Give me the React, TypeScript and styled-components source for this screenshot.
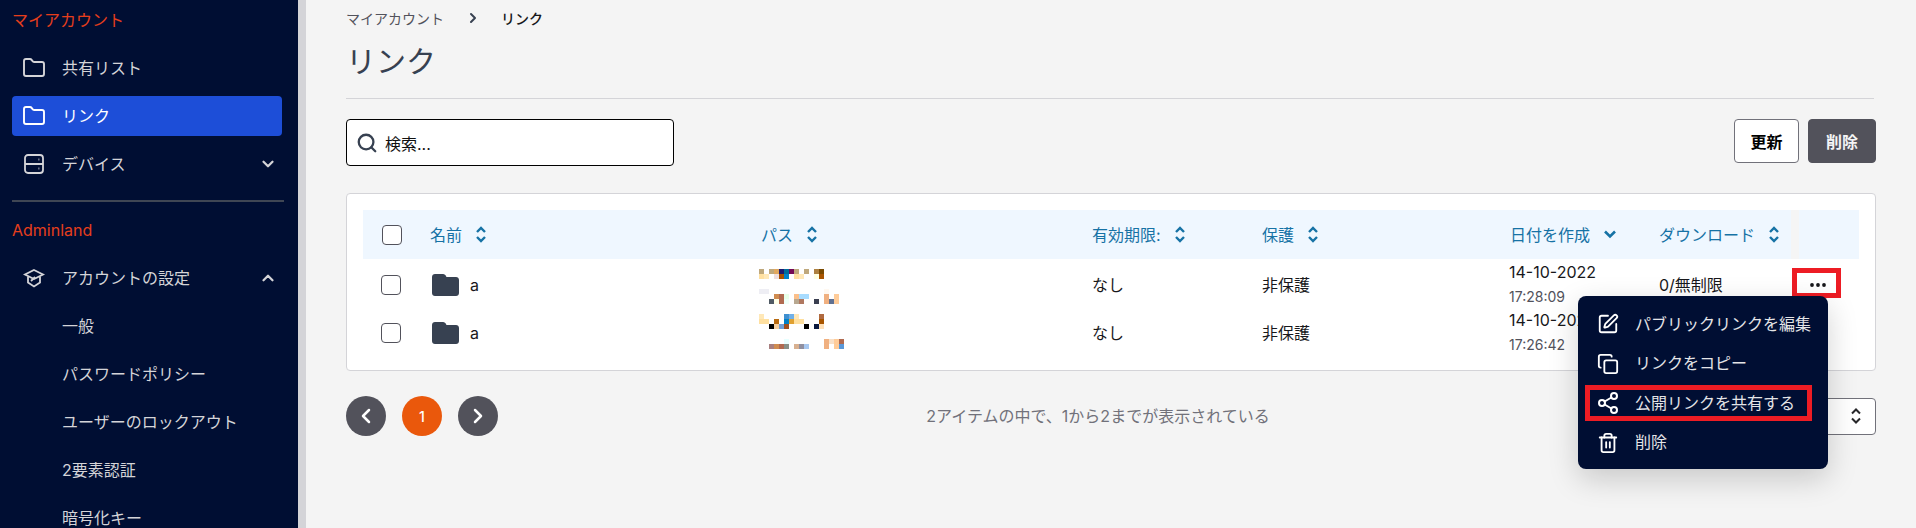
import styled, {createGlobalStyle} from 'styled-components';
import {
    ChevronDown,
    ChevronLeft,
    ChevronRight,
    ChevronUp,
    Copy,
    Folder,
    Search,
    Share2,
    SquarePen,
    Trash2,
} from 'lucide-react';

const GlobalStyle = createGlobalStyle`
    html, body {
        margin: 0;
        height: 528px;
        overflow: hidden;
        background: #f4f4f4;
        font-family: Inter, "Noto Sans CJK JP", sans-serif;
    }
    * {
        box-sizing: border-box;
    }
`;

const Page = styled.div`
    display: flex;
    width: 1916px;
    height: 528px;
    overflow: hidden;
`;

const Sidebar = styled.nav`
    flex: 0 0 306px;
    height: 528px;
    padding: 8px 16px 0 12px;
    background: #000e33;
    border-right: 8px solid #d4d4d8;
    overflow: hidden;
`;

const SectionLabel = styled.div`
    font-size: 16px;
    line-height: 24px;
    color: #e63e1c;
    margin-bottom: 16px;
`;

const NavList = styled.div`
    display: flex;
    flex-direction: column;
    gap: 8px;
`;

const NavItem = styled.div<{$active?: boolean; $sub?: boolean}>`
    display: flex;
    align-items: center;
    gap: 16px;
    flex: 0 0 40px;
    height: 40px;
    padding: 0 5px 0 ${(props) => (props.$sub ? '50px' : '10px')};
    border-radius: 4px;
    font-size: 16px;
    color: ${(props) => (props.$active ? '#ffffff' : '#d4d4d8')};
    background: ${(props) => (props.$active ? '#1d4ed8' : 'transparent')};
`;

const NavText = styled.span`
    padding-bottom: 2px;
`;

const NavArrow = styled.span`
    display: flex;
    margin-left: auto;
`;

const SidebarRule = styled.hr`
    width: 272px;
    height: 2px;
    margin: 16px 0;
    border: 0;
    background: #3f4654;
`;

const Main = styled.main`
    flex: 1;
    min-width: 0;
    padding: 6px 40px 0 40px;
`;

const Breadcrumbs = styled.div`
    display: flex;
    align-items: center;
    height: 24px;
    font-size: 14px;
    color: #52525b;
`;

const CrumbArrow = styled.span`
    display: flex;
    margin: 0 20px 0 21px;
    color: #374151;
`;

const CrumbCurrent = styled.span`
    color: #18181b;
    font-weight: 500;
`;

const Title = styled.h1`
    margin: 10px 2px 0 0;
    padding-top: 1px;
    height: 59px;
    border-bottom: 1px solid #d4d4d8;
    font-size: 30px;
    line-height: 40px;
    font-weight: 400;
    color: #374151;
`;

const Toolbar = styled.div`
    display: flex;
    align-items: flex-start;
    justify-content: space-between;
    margin-top: 20px;
`;

const SearchBox = styled.div`
    display: flex;
    align-items: center;
    gap: 7px;
    width: 328px;
    height: 47px;
    padding-left: 9px;
    background: #ffffff;
    border: 1px solid #000000;
    border-radius: 4px;
    font-size: 16px;
    color: #111111;
`;

const Buttons = styled.div`
    display: flex;
    gap: 9px;
`;

const Button = styled.div<{$primary?: boolean}>`
    display: flex;
    align-items: center;
    justify-content: center;
    width: ${(props) => (props.$primary ? '68px' : '65px')};
    height: 44px;
    border-radius: 4px;
    font-size: 16px;
    font-weight: 700;
    color: ${(props) => (props.$primary ? '#f4f4f5' : '#000000')};
    background: ${(props) => (props.$primary ? '#52525b' : '#ffffff')};
    border: 1px solid ${(props) => (props.$primary ? '#52525b' : '#71717a')};
`;

const Card = styled.section`
    margin-top: 27px;
    padding: 16px 16px 15px;
    background: #ffffff;
    border: 1px solid #d4d4d8;
    border-radius: 4px;
`;

const columns = '67px 331px 331px 170px 248px 149px 132px 68px';

const HeadRow = styled.div`
    display: grid;
    grid-template-columns: ${columns};
    height: 49px;
    background: #eff7ff;
    font-size: 16px;
    color: #1672a5;
`;

const HeadCell = styled.div`
    display: flex;
    align-items: center;
    gap: 14px;
`;

const HeadText = styled.span`
    padding-bottom: 2px;
`;

const HeadCheckCell = styled(HeadCell)`
    padding-left: 19px;
`;

const HeadEndCell = styled.div`
    border-left: 8px solid #f5f5f5;
`;

const Row = styled.div`
    display: grid;
    grid-template-columns: ${columns};
    height: 48px;
    font-size: 16px;
    color: #18181b;
`;

const Cell = styled.div`
    display: flex;
    align-items: center;
`;

const RowCheckCell = styled(Cell)`
    padding: 2px 0 0 18px;
`;

const NameCell = styled(Cell)`
    gap: 11px;
    padding: 2px 0 0 2px;
`;

const PathCell = styled(Cell)`
    margin-left: -2px;
`;

const DateCell = styled.div`
    padding-top: 1px;
    margin-left: -1px;
`;

const DateText = styled.div`
    line-height: 24px;
`;

const TimeText = styled.div`
    margin-top: 1px;
    font-size: 14px;
    line-height: 24px;
    color: #52525b;
`;

const ActionCell = styled(Cell)`
    position: relative;
`;

const Checkbox = styled.span`
    display: block;
    width: 20px;
    height: 20px;
    background: #ffffff;
    border: 1px solid #52525b;
    border-radius: 4px;
`;

const ActionButton = styled.div`
    display: flex;
    align-items: center;
    justify-content: center;
    width: 49px;
    height: 30px;
    margin: -2px 0 0 1px;
    padding: 3px 0 0 3px;
    background: #ffffff;
    border: 5px solid #ed1c24;
`;

const Menu = styled.div`
    position: absolute;
    top: 37px;
    right: 31px;
    z-index: 2;
    display: flex;
    flex-direction: column;
    gap: 3.5px;
    width: 250px;
    height: 173px;
    padding: 10px 16px 0 7px;
    background: #000e33;
    border-radius: 8px;
    box-shadow: 0 10px 30px rgba(0, 0, 0, 0.18);
`;

const MenuItem = styled.div<{$marked?: boolean}>`
    display: flex;
    align-items: center;
    gap: 15px;
    height: 36px;
    padding-left: 11px;
    font-size: 16px;
    white-space: nowrap;
    color: #e4e4e7;
    box-shadow: ${(props) => (props.$marked ? 'inset 0 0 0 5px #ed1c24' : 'none')};
`;

const MenuIcon = styled.span`
    display: flex;
    justify-content: center;
    width: 24px;
    color: #ffffff;
`;

const MenuText = styled.span`
    padding-bottom: 3px;
`;

const Footer = styled.div`
    display: flex;
    align-items: center;
    justify-content: space-between;
    margin-top: 25px;
`;

const Pager = styled.div`
    display: flex;
    gap: 16px;
`;

const PageButton = styled.div<{$current?: boolean}>`
    display: flex;
    align-items: center;
    justify-content: center;
    width: 40px;
    height: 40px;
    border-radius: 50%;
    font-size: 14px;
    font-weight: 500;
    color: #ffffff;
    background: ${(props) => (props.$current ? '#ea580c' : '#52525b')};
`;

const PageInfo = styled.div`
    padding-bottom: 3px;
    font-size: 16px;
    color: #71717a;
`;

const PageSize = styled.div`
    display: flex;
    align-items: center;
    justify-content: flex-end;
    width: 178px;
    height: 37px;
    padding-right: 13px;
    background: #ffffff;
    border: 1px solid #71717a;
    border-radius: 4px;
    color: #27272a;
`;

const SortIcon = () => (
    <svg width="10" height="17" viewBox="0 0 10 17" fill="none" stroke="currentColor" strokeWidth="2.4">
        <path d="M1 6 L5 2 L9 6" />
        <path d="M1 11 L5 15 L9 11" />
    </svg>
);

const SortDownIcon = () => (
    <svg width="12" height="9" viewBox="0 0 12 9" fill="none" stroke="currentColor" strokeWidth="2.6">
        <path d="M1 1.5 L6 6.5 L11 1.5" />
    </svg>
);

const ServerIcon = () => (
    <svg width="24" height="24" viewBox="-2 -2 24 24" fill="none" stroke="currentColor" strokeWidth="1.8">
        <rect x="1" y="1" width="18" height="18" rx="3" />
        <path d="M1 10h18M14.5 5.5h.8M14.5 14.5h.8" />
    </svg>
);

const CapIcon = () => (
    <svg width="24" height="24" viewBox="-2 -2 24 24" fill="none" stroke="currentColor" strokeWidth="1.8">
        <path d="M10 2 L19 6.5 L10 11 L1 6.5 Z" />
        <path d="M4 8.5 V14.5 L10 18.5 L16 14.5 V8.5" />
        <path d="M7 13 L11 9" />
    </svg>
);

const SolidFolder = () => (
    <svg width="27" height="22" viewBox="0 0 27 22" fill="#374151">
        <path d="M3 0 H11 C12.5 0 13.5 .8 14.5 3 H24 C25.7 3 27 4.3 27 6 V19 C27 20.7 25.7 22 24 22 H3 C1.3 22 0 20.7 0 19 V3 C0 1.3 1.3 0 3 0 Z" />
    </svg>
);

const Dots = () => (
    <svg width="16" height="4" viewBox="0 0 16 4" fill="#18181b">
        <circle cx="2" cy="2" r="1.9" />
        <circle cx="8" cy="2" r="1.9" />
        <circle cx="14" cy="2" r="1.9" />
    </svg>
);

// blurred path thumbnails: [column, line, colour], cells are 5px
type Pixel = [number, number, string];

const firstPath: Pixel[] = [
    [0, 9, '#bfa87c'], [2, 9, '#bfa87c'], [3, 9, '#e0a860'], [4, 9, '#1e1a70'], [5, 9, '#006d9a'], [6, 9, '#750a55'],
    [7, 9, '#bfa87c'], [9, 9, '#bfa87c'], [11, 9, '#ad8040'], [12, 9, '#7a4a00'],
    [0, 14, '#ffe0a0'], [1, 14, '#ffe8b8'], [3, 14, '#eedede'], [4, 14, '#a85000'], [5, 14, '#0080c8'], [7, 14, '#ffe0a0'],
    [8, 14, '#ffe8b8'], [11, 14, '#ffffe0'], [12, 14, '#a85500'],
    [0, 29, '#eeeef4'], [1, 29, '#eeeef4'], [13, 29, '#fff8f0'],
    [3, 34, '#d08c50'], [4, 34, '#b06a50'], [5, 34, '#e8ffe8'], [7, 34, '#fbbf8a'], [8, 34, '#a8dcff'], [9, 34, '#a8dcff'],
    [13, 34, '#f0b080'], [15, 34, '#ffcc99'],
    [2, 39, '#505a64'], [3, 39, '#ffffe8'], [4, 39, '#b06a50'], [5, 39, '#eefff8'], [7, 39, '#b8a890'], [8, 39, '#b07860'],
    [11, 39, '#3a3f50'], [13, 39, '#f0b080'], [14, 39, '#607090'], [15, 39, '#ffcc99'],
];

const secondPath: Pixel[] = [
    [0, 6, '#ffe8b8'], [5, 6, '#4090d0'], [6, 6, '#70b0e8'], [7, 6, '#ffe8b8'], [12, 6, '#b06a40'],
    [0, 11, '#ffe0a0'], [1, 11, '#ffe0a0'], [3, 11, '#b86a10'], [5, 11, '#0080c8'], [6, 11, '#e0a030'], [7, 11, '#ffe0a0'],
    [8, 11, '#ffe0a0'], [12, 11, '#a85500'],
    [2, 16, '#000000'], [3, 16, '#f8d0a0'], [4, 16, '#70a0d8'], [5, 16, '#a05020'], [9, 16, '#000000'], [11, 16, '#0a1a40'],
    [12, 16, '#ffe0b8'],
    [5, 31, '#e8ffff'], [13, 31, '#f0b080'], [14, 31, '#f8e0c8'], [15, 31, '#ffcc99'], [16, 31, '#b06a50'],
    [2, 36, '#a88080'], [3, 36, '#d08c50'], [4, 36, '#b06a50'], [5, 36, '#889088'], [7, 36, '#d8b090'], [8, 36, '#9090a0'],
    [9, 36, '#a8c8f0'], [13, 36, '#f0b080'], [15, 36, '#ffcc99'], [16, 36, '#5a98d8'],
];

const BlurredPath = ({pixels}: {pixels: Pixel[]}) => (
    <svg width="85" height="48" viewBox="0 0 85 48" shapeRendering="crispEdges">
        {pixels.map(([col, y, color]) => (
            <rect key={`${col}-${y}`} x={col * 5} y={y} width="5" height="5" fill={color} />
        ))}
    </svg>
);

const headers = [
    {label: '名前', icon: <SortIcon />},
    {label: 'パス', icon: <SortIcon />},
    {label: '有効期限:', icon: <SortIcon />},
    {label: '保護', icon: <SortIcon />},
    {label: '日付を作成', icon: <SortDownIcon />},
    {label: 'ダウンロード', icon: <SortIcon />},
];

const links = [
    {pixels: firstPath, time: '17:28:09'},
    {pixels: secondPath, time: '17:26:42'},
];

const subItems = ['一般', 'パスワードポリシー', 'ユーザーのロックアウト', '2要素認証', '暗号化キー'];

const App = () => {
    return (
        <Page>
            <GlobalStyle />
            <Sidebar>
                <SectionLabel>マイアカウント</SectionLabel>
                <NavList>
                    <NavItem>
                        <Folder size={24} strokeWidth={1.9} />
                        <NavText>共有リスト</NavText>
                    </NavItem>
                    <NavItem $active>
                        <Folder size={24} strokeWidth={1.9} />
                        <NavText>リンク</NavText>
                    </NavItem>
                    <NavItem>
                        <ServerIcon />
                        <NavText>デバイス</NavText>
                        <NavArrow>
                            <ChevronDown size={18} strokeWidth={3} />
                        </NavArrow>
                    </NavItem>
                </NavList>
                <SidebarRule />
                <SectionLabel>Adminland</SectionLabel>
                <NavList>
                    <NavItem>
                        <CapIcon />
                        <NavText>アカウントの設定</NavText>
                        <NavArrow>
                            <ChevronUp size={18} strokeWidth={3} />
                        </NavArrow>
                    </NavItem>
                    {subItems.map((item) => (
                        <NavItem $sub key={item}>
                            <NavText>{item}</NavText>
                        </NavItem>
                    ))}
                </NavList>
            </Sidebar>
            <Main>
                <Breadcrumbs>
                    マイアカウント
                    <CrumbArrow>
                        <ChevronRight size={16} strokeWidth={3} />
                    </CrumbArrow>
                    <CrumbCurrent>リンク</CrumbCurrent>
                </Breadcrumbs>
                <Title>リンク</Title>
                <Toolbar>
                    <SearchBox>
                        <Search size={22} strokeWidth={2.5} color="#374151" />
                        検索...
                    </SearchBox>
                    <Buttons>
                        <Button>更新</Button>
                        <Button $primary>削除</Button>
                    </Buttons>
                </Toolbar>
                <Card>
                    <HeadRow>
                        <HeadCheckCell>
                            <Checkbox />
                        </HeadCheckCell>
                        {headers.map((header) => (
                            <HeadCell key={header.label}>
                                <HeadText>{header.label}</HeadText>
                                {header.icon}
                            </HeadCell>
                        ))}
                        <HeadEndCell />
                    </HeadRow>
                    {links.map((link, index) => (
                        <Row key={link.time}>
                            <RowCheckCell>
                                <Checkbox />
                            </RowCheckCell>
                            <NameCell>
                                <SolidFolder />a
                            </NameCell>
                            <PathCell>
                                <BlurredPath pixels={link.pixels} />
                            </PathCell>
                            <Cell>なし</Cell>
                            <Cell>非保護</Cell>
                            <DateCell>
                                <DateText>14-10-2022</DateText>
                                <TimeText>{link.time}</TimeText>
                            </DateCell>
                            <Cell>0/無制限</Cell>
                            {index === 0 ? (
                                <ActionCell>
                                    <ActionButton>
                                        <Dots />
                                    </ActionButton>
                                    <Menu>
                                        <MenuItem>
                                            <MenuIcon>
                                                <SquarePen size={22} strokeWidth={2} />
                                            </MenuIcon>
                                            <MenuText>パブリックリンクを編集</MenuText>
                                        </MenuItem>
                                        <MenuItem>
                                            <MenuIcon>
                                                <Copy size={22} strokeWidth={2} />
                                            </MenuIcon>
                                            <MenuText>リンクをコピー</MenuText>
                                        </MenuItem>
                                        <MenuItem $marked>
                                            <MenuIcon>
                                                <Share2 size={28} strokeWidth={2} />
                                            </MenuIcon>
                                            <MenuText>公開リンクを共有する</MenuText>
                                        </MenuItem>
                                        <MenuItem>
                                            <MenuIcon>
                                                <Trash2 size={22} strokeWidth={2} />
                                            </MenuIcon>
                                            <MenuText>削除</MenuText>
                                        </MenuItem>
                                    </Menu>
                                </ActionCell>
                            ) : (
                                <Cell />
                            )}
                        </Row>
                    ))}
                </Card>
                <Footer>
                    <Pager>
                        <PageButton>
                            <ChevronLeft size={24} strokeWidth={2.5} />
                        </PageButton>
                        <PageButton $current>1</PageButton>
                        <PageButton>
                            <ChevronRight size={24} strokeWidth={2.5} />
                        </PageButton>
                    </Pager>
                    <PageInfo>2アイテムの中で、1から2までが表示されている</PageInfo>
                    <PageSize>
                        <svg width="12" height="18" viewBox="0 0 12 18" fill="none" stroke="currentColor" strokeWidth="2">
                            <path d="M2 6.5 L6 2.5 L10 6.5" />
                            <path d="M2 11.5 L6 15.5 L10 11.5" />
                        </svg>
                    </PageSize>
                </Footer>
            </Main>
        </Page>
    );
};

export default App;
